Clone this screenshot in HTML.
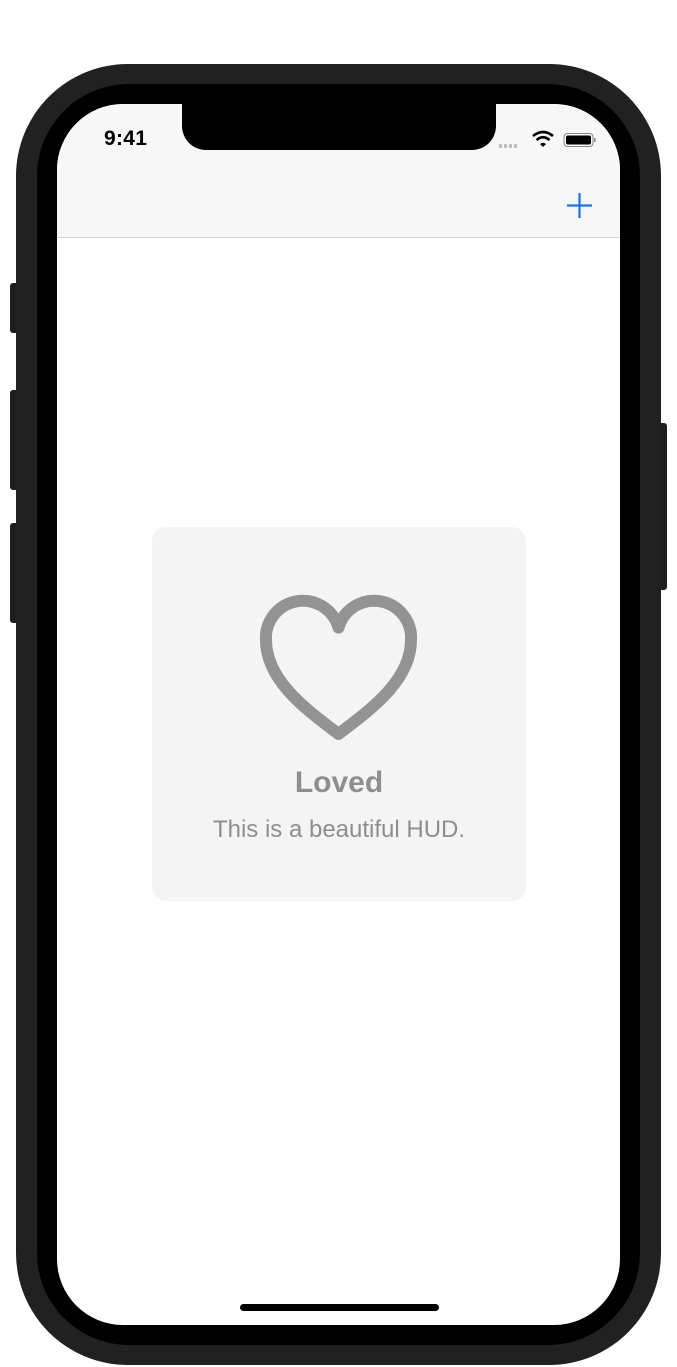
<!DOCTYPE html>
<html><head><meta charset="utf-8"><style>
html,body{margin:0;padding:0;background:#fff;width:677px;height:1367px;overflow:hidden;position:relative;font-family:"Liberation Sans",sans-serif}
.a{position:absolute}
</style></head><body>
<div class="a" style="left:10px;top:283px;width:9px;height:50px;background:#1e1e1e;border-radius:3px"></div>
<div class="a" style="left:10px;top:390px;width:9px;height:100px;background:#1e1e1e;border-radius:3px"></div>
<div class="a" style="left:10px;top:523px;width:9px;height:100px;background:#1e1e1e;border-radius:3px"></div>
<div class="a" style="left:658px;top:423px;width:9px;height:167px;background:#1e1e1e;border-radius:3px"></div>
<div class="a" style="left:16px;top:64px;width:645px;height:1301px;background:#212121;border-radius:112px"></div>
<div class="a" style="left:37px;top:84px;width:603px;height:1261px;background:#000;border-radius:92px"></div>
<div class="a" style="left:57px;top:104px;width:563px;height:1221px;background:#fff;border-radius:66px;overflow:hidden">
  <div class="a" style="left:0;top:0;width:563px;height:133px;background:#f7f7f7;border-bottom:1px solid #d6d6d6"></div>
  <div class="a" style="left:125px;top:-2px;width:314px;height:48px;background:#000;border-radius:0 0 24px 24px"></div>
  <div class="a" style="left:47px;top:23px;font-size:21px;font-weight:bold;color:#000;letter-spacing:0.3px">9:41</div>
  <svg class="a" style="left:440px;top:24px" width="120" height="24" viewBox="0 0 120 24">
    <g fill="#bbb"><rect x="2" y="16" width="3" height="4" rx="1"/><rect x="7" y="16" width="3" height="4" rx="1"/><rect x="12" y="16" width="3" height="4" rx="1"/><rect x="17" y="16" width="3" height="4" rx="1"/></g>
    <path d="M36 8 Q46 0 56 8" stroke="#000" stroke-width="2.6" fill="none"/>
    <path d="M39.5 12 Q46 6.5 52.5 12" stroke="#000" stroke-width="2.6" fill="none"/>
    <path d="M43 16 L46 19 L49 16 Q46 13.5 43 16Z" fill="#000"/>
    <rect x="67" y="5.5" width="29" height="13" rx="3.5" fill="none" stroke="#888" stroke-width="1"/>
    <rect x="69" y="7.5" width="25" height="9" rx="2" fill="#000"/>
    <rect x="97" y="10" width="1.5" height="4" fill="#888"/>
  </svg>
  <svg class="a" style="left:510px;top:89px" width="25" height="25"><path d="M12.5 0V25M0 12.5H25" stroke="#1a73f0" stroke-width="2.2"/></svg>
  <div class="a" style="left:183px;top:1200px;width:199px;height:7px;background:#000;border-radius:4px"></div>
</div>
<div class="a" style="left:152px;top:527px;width:374px;height:374px;background:#f4f4f4;border-radius:14px"></div>
<svg class="a" style="left:0;top:0" width="677" height="1367">
  <path d="M338.5 627.6 A37 37 0 0 0 266 640 C266 682 310 712 338.5 734 C367 712 411 682 411 640 A37 37 0 0 0 338.5 627.6 Z" fill="none" stroke="#939393" stroke-width="12" stroke-linejoin="round"/>
</svg>
<div class="a" style="left:152px;top:766px;width:374px;text-align:center;font-size:30px;font-weight:bold;color:#8e8e8e">Loved</div>
<div class="a" style="left:152px;top:816px;width:374px;text-align:center;font-size:24px;color:#8e8e8e">This is a beautiful HUD.</div>
</body></html>
